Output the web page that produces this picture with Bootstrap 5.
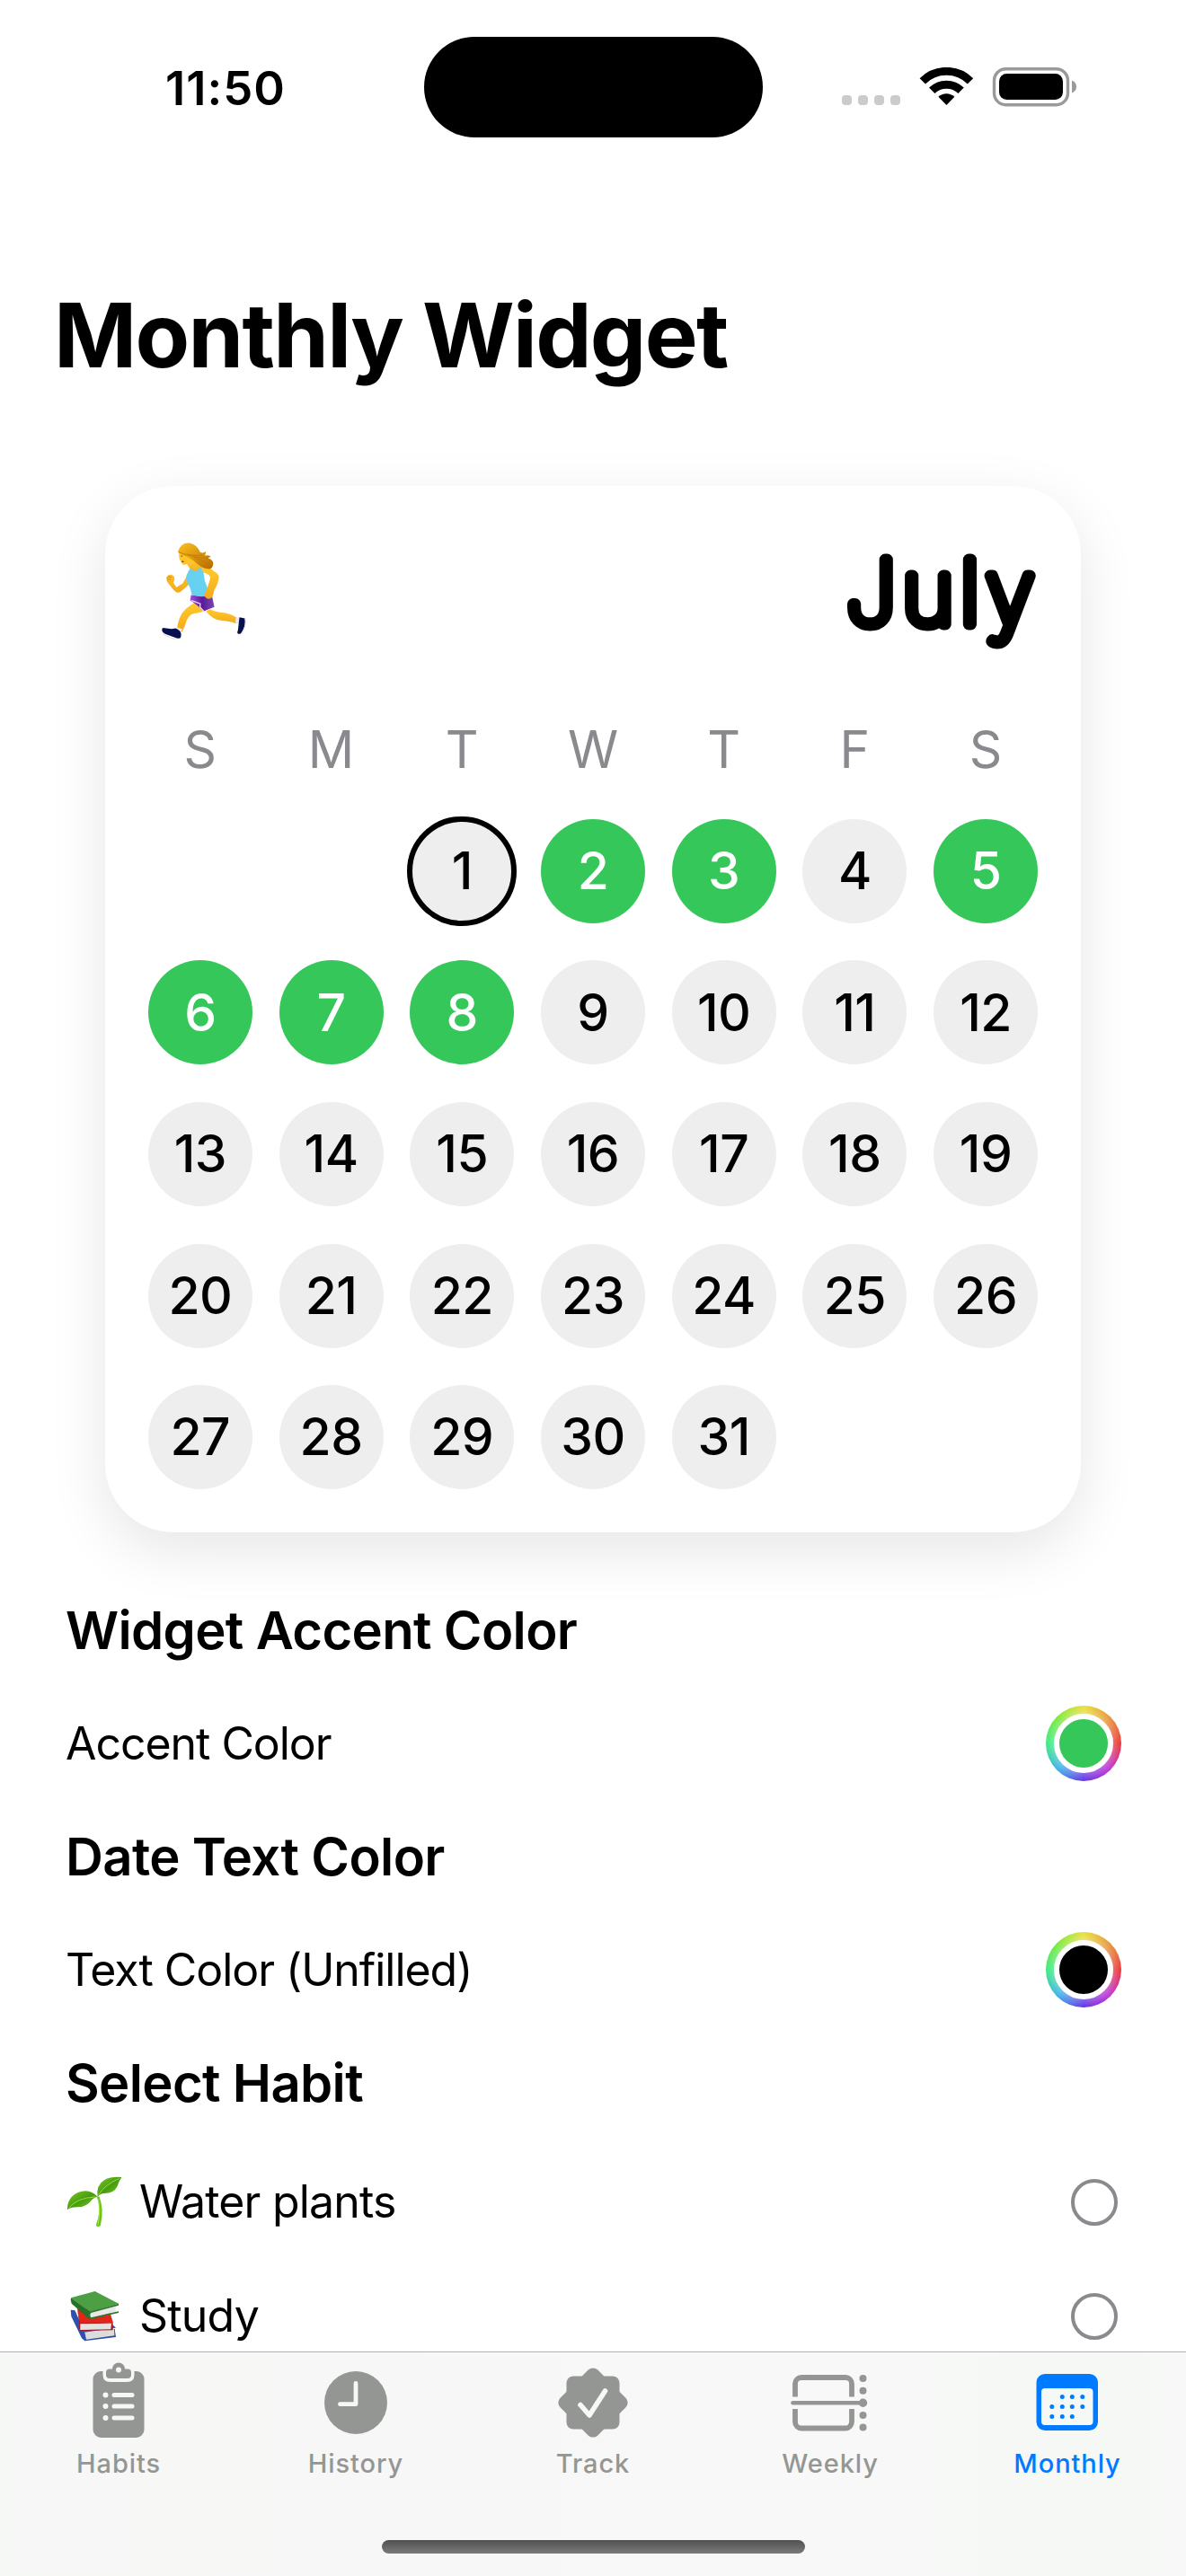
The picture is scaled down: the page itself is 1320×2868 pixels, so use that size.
<!DOCTYPE html>
<html lang="en">
<head>
<meta charset="utf-8">
<meta name="viewport" content="width=device-width, initial-scale=1">
<title>Monthly Widget</title>
<link href="https://cdn.jsdelivr.net/npm/bootstrap@5.3.0/dist/css/bootstrap.min.css" rel="stylesheet">
<style>
  body { font-family: Inter, "Liberation Sans", sans-serif; color: #000; background: #fff; width: 1320px; height: 2868px; overflow: hidden; }
  svg { display: block; flex: none; }
  .statusbar { height: 194px; padding-top: 41px; }
  .clock-text { width: 472px; padding-left: 184px; font-size: 52.5px; font-weight: 600; line-height: 112px; letter-spacing: 1px; padding-top: 1px; }
  .island { width: 377px; height: 112px; border-radius: 56px; background: #000; }
  .status-icons { margin-left: 88px; height: 112px; }
  .page-title { font-size: 99px; font-weight: 700; line-height: 120px; margin: 119px 0 0 60px; letter-spacing: -1.7px; white-space: nowrap; }
  .widget { width: 1086px; height: 1165px; margin: 108px 0 0 117px; border-radius: 76px; background: #fff; box-shadow: 0 20px 64px rgba(0,0,0,.1); padding: 0 33px; }
  .widget-head { height: 254px; padding: 62px 12px 0 30px; }
  .week { height: 80px; margin-bottom: 16px; font-size: 57px; line-height: 80px; color: #8a8a8e; }
  .week > div, .days > div { width: 14.2857%; }
  .days > div { height: 157.6px; }
  .day { width: 116px; height: 116px; border-radius: 50%; background: #eee; font-size: 57px; font-weight: 500; letter-spacing: -.5px; }
  .day.done { background: #35c759; color: #fff; }
  .day.today { width: 122px; height: 122px; border: 6px solid #000; }
  .settings { height: 912px; padding: 46px 72px 0 73px; overflow: hidden; }
  .settings h2 { font-size: 58px; font-weight: 600; line-height: 126px; margin: 0; letter-spacing: -.65px; white-space: nowrap; }
  .setting { height: 126px; font-size: 50px; letter-spacing: -1.05px; }
  .habit { height: 127px; font-size: 50px; letter-spacing: -.8px; }
  .habits { padding-top: 6px; }
  .wheel { width: 84px; height: 84px; border-radius: 50%; background: radial-gradient(circle 42px, rgba(255,255,255,.25) 78%, rgba(255,255,255,0) 100%), conic-gradient(#e8df3a, #e8973a 12.5%, #ea3738 25%, #bd34d6 37.5%, #6034e2 50%, #3fb2ea 62.5%, #3bea80 75%, #7aea3a 87.5%, #e8df3a); }
  .wheel > div { width: 66px; height: 66px; border: 6px solid #fff; border-radius: 50%; }
  .radio-ring { width: 52px; height: 52px; border: 4px solid #8a8a8e; border-radius: 50%; margin-right: 4px; }
  .tabs { height: 250px; border-top: 1px solid #b2b2b2; background: linear-gradient(90deg, #f6f8f6 0, #f7f7f6 12%, #f7f7f7 25%, #f8f8f8 70%, #f5f8f5 94%, #f8f8f8 100%); padding-top: 5px; }
  .tab { width: 264px; color: #949693; font-size: 29px; font-weight: 500; line-height: 46px; letter-spacing: .9px; }
  .tab.current { color: #007aff; }
  .home-bar { width: 471px; height: 15px; border-radius: 8px; margin-top: 62px; background: linear-gradient(#505050, #7b7b7b); }
</style>
</head>
<body class="d-flex flex-column">
<header class="statusbar d-flex">
  <div class="clock-text">11:50</div>
  <div class="island"></div>
  <div class="status-icons d-flex align-items-center">
    <svg width="263" height="44" viewBox="937 75 263 44">
      <g fill="#cbcbcb"><rect x="937" y="106" width="11" height="11" rx="4"/><rect x="955" y="106" width="11" height="11" rx="4"/><rect x="973" y="106" width="11" height="11" rx="4"/><rect x="991" y="106" width="11" height="11" rx="4"/></g>
      <g transform="translate(1053.4 117)">
        <path d="M-26.6-26.6A37.6 37.6 0 0 1 26.6-26.6M-16.2-16.2A23 23 0 0 1 16.2-16.2" fill="none" stroke="#000" stroke-width="9"/>
        <path d="M0 0L-9-9.2A13 13 0 0 1 9-9.2Z"/>
      </g>
      <rect x="1106.5" y="76.7" width="82" height="40" rx="13" fill="none" stroke="#9a9a9a" stroke-width="3.4"/>
      <rect x="1112" y="82" width="71" height="29" rx="8.5"/>
      <path d="M1193 89.5q5 2 5 7t-5 7z" fill="#9a9a9a"/>
    </svg>
  </div>
</header>

<h1 class="page-title">Monthly Widget</h1>

<section class="widget flex-shrink-0">
  <div class="widget-head d-flex justify-content-between align-items-start">
    <svg width="94" height="109" viewBox="0 0 300 342" preserveAspectRatio="none">
      <defs>
        <linearGradient id="skin" x2="0" y2="1"><stop stop-color="#ffcb2e"/><stop offset="1" stop-color="#f5a81c"/></linearGradient>
        <linearGradient id="hair" x2="1" y2="1"><stop stop-color="#ffc21c"/><stop offset="1" stop-color="#b36a00"/></linearGradient>
        <linearGradient id="purple" x2="1"><stop stop-color="#a24fd8"/><stop offset=".5" stop-color="#5a1897"/><stop offset="1" stop-color="#7a4ab0"/></linearGradient>
      </defs>
      <path d="M172 236q25 12 45 12 32 5 54 20l-6 18q-30-10-56-11-30-4-52-32z" fill="url(#skin)"/>
      <path d="M264 265l14 4-4 18-13-5z" fill="#e9e9ee"/>
      <path d="M276 264l19 4q6 24-12 51-4 5-11 3-6-1-1-14z" fill="#06104e"/>
      <path d="M297 270q4 28-14 52" fill="none" stroke="#e6e6ea" stroke-width="4"/>
      <path d="M119 212l42 21q-21 17-46 18-23 4-33 44l-10 21-18-6q2-31 17-58 16-22 48-40z" fill="url(#skin)"/>
      <path d="M53 300l20 5-8 18-15-6z" fill="#e9e9ee"/>
      <path d="M1 307q0-7 9-5l25 3 14-2q9 4 15 9 8 8 3 24-5 4-14 1-20-7-39-14-14-5-13-16z" fill="#06104e"/>
      <path d="M3 323q25 13 53 21" fill="none" stroke="#e6e6ea" stroke-width="4"/>
      <path d="M104 187q42 2 73-5l10 46-38 15-20-18-28-20z" fill="url(#purple)"/>
      <path d="M106 206l31 11-1 12 13 13" fill="none" stroke="#e8dcf0" stroke-width="4"/>
      <path d="M127 91q-14-3-27 10l-26 46q-14 8-22 13-6-10-11-17 6-8 4-18-3-8-11-10-17-1-17 16 0 10 9 18 12 17 21 24 12 10 24-1 22-16 34-34z" fill="url(#skin)"/>
      <path d="M36 124q-12-5-19 4M32 132q-8-4-13 4" fill="none" stroke="#cf8612" stroke-width="3"/>
      <path d="M84 70l20-8 40 14 8 18-8 16-32 4z" fill="url(#skin)"/>
      <path d="M103 92q5 12 18 9 12-2 18-15l11 2q-7 50 26 96-30 16-69 2-5-29-20-49-4-20 16-45z" fill="#67d1f2"/>
      <path d="M141 90q22-6 48 16 14 8 14 19-2 22-16 44l-7 24q-11 12-23 3-11-10 1-22l14-44q2-8-5-14-16-6-24-14z" fill="url(#skin)"/>
      <path d="M62 34l-1 18q1 10 8 19l4 8q9 5 18-2 12 8 24-4 10-8 12-20l-37-22z" fill="#ffc32c"/>
      <path d="M57 36Q68 2 99 5q27 6 38 33 14 4 19-4 2 9-3 15 16-4 22 4-8 1-10 5 18 6 18 18-2 20-15 20-24-2-38-15-14-14-34-25-22-8-39-20z" fill="url(#hair)"/>
      <path d="M60 37q36 15 86 10M92 44q26 14 70 13M116 56l44 18" fill="none" stroke="#c77a05" stroke-width="3"/>
      <path d="M69 50l4 1M71 68q6 4 6 0" fill="none" stroke="#6a3c13" stroke-width="4"/>
    </svg>
    <svg width="240" height="140" viewBox="0 0 240 140" class="overflow-visible">
      <text x="240" y="91.500" text-anchor="end" font-family="Inter, sans-serif" font-size="99" font-weight="100" fill="#000" stroke="#000" stroke-width="13" stroke-linejoin="round" letter-spacing="7">July</text>
    </svg>
  </div>
  <div class="week d-flex text-center"><div>S</div><div>M</div><div>T</div><div>W</div><div>T</div><div>F</div><div>S</div></div>
  <div class="days d-flex flex-wrap" id="days"></div>
</section>

<main class="settings flex-shrink-0">
  <h2>Widget Accent Color</h2>
  <div class="setting d-flex align-items-center justify-content-between"><span>Accent Color</span><div class="wheel d-flex align-items-center justify-content-center"><div style="background:#35c759"></div></div></div>
  <h2>Date Text Color</h2>
  <div class="setting d-flex align-items-center justify-content-between"><span>Text Color (Unfilled)</span><div class="wheel d-flex align-items-center justify-content-center"><div style="background:#000"></div></div></div>
  <h2>Select Habit</h2>
  <div class="habits">
    <div class="habit d-flex align-items-center">
      <svg width="82" height="60" viewBox="73 78 246 180">
        <defs><linearGradient id="leaf" x2="1" y2="1"><stop stop-color="#7ccb1c"/><stop offset=".5" stop-color="#479d12"/><stop offset="1" stop-color="#7dd31c"/></linearGradient></defs>
        <path d="M178 150q16 45-3 92-1 6 5 7 8 1 10-5 12-55-5-96z" fill="#6cc41a"/>
        <path d="M183 158q8 42-2 86" fill="none" stroke="#a5e640" stroke-width="3"/>
        <path d="M180 149Q154 120 116 134 78 150 79 193 88 184 111 184 142 185 162 158 170 150 180 149z" fill="url(#leaf)"/>
        <path d="M180 150q-6-40 23-57 22-12 57-9-9 13-14 30-11 24-44 24-15 1-22 12z" fill="url(#leaf)"/>
        <path d="M83 188q28-36 90-38M183 143q20-34 70-55" fill="none" stroke="#a7df55" stroke-width="2.500"/>
      </svg>
      <span>Water plants</span><div class="radio-ring ms-auto"></div>
    </div>
    <div class="habit d-flex align-items-center">
      <svg width="82" height="60" viewBox="70 444 246 180">
        <path d="M87 512l14 2 36 80 98-18v8l3 19-104 13-10-9-35-73z" fill="#2f4fae"/>
        <path d="M134 587l98-12 1 23-94 13z" fill="#dcdcdc"/>
        <path d="M124 580l106-16 8 8-104 15z" fill="#3658c2"/>
        <path d="M109 508l106 2 14 46-110 5z" fill="#e0261c"/>
        <path d="M109 510l10 46 109 0 0 24-108 2q-8-12-4-22z" fill="#b3140f"/>
        <path d="M119 559l104-2-2 20-102 2z" fill="#e3e3e3"/>
        <path d="M88 472l80-22 79 41-95 28z" fill="#4d9f43"/>
        <path d="M88 472l64 46-2 26-60-53q-5-9-2-19z" fill="#27702a"/>
        <path d="M153 520l87-26q-5 12-1 24l-86 22q-5-8 0-20z" fill="#e8e8e8"/>
        <path d="M151 518l96-27v6l-92 25q-6 8 0 16l92-21v5l-96 22q-8-12 0-26z" fill="#2a7a2d"/>
      </svg>
      <span>Study</span><div class="radio-ring ms-auto"></div>
    </div>
  </div>
</main>

<nav class="tabs flex-shrink-0 d-flex flex-column align-items-center">
  <div class="d-flex text-center">
    <div class="tab d-flex flex-column align-items-center">
      <svg width="110" height="96" viewBox="-55 -51 110 96" fill="currentColor">
        <path d="M-17.5-35H-20a9 9 0 0 0-8.500 9V30a9 9 0 0 0 9 9h39a9 9 0 0 0 9-9V-26a9 9 0 0 0-8.500-9H17.500v4q0 8-8 8h-19q-8 0-8-8z"/>
        <path fill-rule="evenodd" d="M-7-37.500a7 7 0 0 1 14 0h3a4 4 0 0 1 4 4v2.500a4 4 0 0 1-4 4h-20a4 4 0 0 1-4-4v-2.500a4 4 0 0 1 4-4zM0-39.500a3 3 0 1 0 0 6 3 3 0 0 0 0-6"/>
        <g fill="#f7f7f7"><circle cx="-14.500" cy="-8.500" r="3"/><circle cx="-14.500" cy="4" r="3"/><circle cx="-14.500" cy="17" r="3"/><rect x="-7.500" y="-11" width="25" height="5" rx="2.500"/><rect x="-7.500" y="1.500" width="25" height="5" rx="2.500"/><rect x="-7.500" y="14.500" width="25" height="5" rx="2.500"/></g>
      </svg><span>Habits</span>
    </div>
    <div class="tab d-flex flex-column align-items-center">
      <svg width="110" height="96" viewBox="-55 -51 110 96" fill="currentColor">
        <circle r="35"/><path d="M0-21.500V1.700H-17.500" fill="none" stroke="#f7f7f7" stroke-width="4.800" stroke-linecap="round" stroke-linejoin="round"/>
      </svg><span>History</span>
    </div>
    <div class="tab d-flex flex-column align-items-center">
      <svg width="110" height="96" viewBox="-55 -51 110 96" fill="currentColor">
        <rect x="-29.500" y="-29.500" width="59" height="59" rx="7.500"/><rect x="-29.500" y="-29.500" width="59" height="59" rx="7.500" transform="rotate(45)"/>
        <path d="M-14 2.500L-4 14 13.500-13" fill="none" stroke="#f8f8f8" stroke-width="5.600" stroke-linecap="round" stroke-linejoin="round"/>
      </svg><span>Track</span>
    </div>
    <div class="tab d-flex flex-column align-items-center">
      <svg width="110" height="96" viewBox="-55 -51 110 96" fill="currentColor">
        <path d="M-39-6.500V-21a7 7 0 0 1 7-7H17a7 7 0 0 1 7 7v14.500M-39 7V21.500a7 7 0 0 0 7 7H17a7 7 0 0 0 7-7V7" fill="none" stroke="currentColor" stroke-width="5.800"/>
        <path d="M-41.500.3H36" stroke="currentColor" stroke-width="4.600" stroke-linecap="round"/>
        <circle cx="36.500" cy="-27" r="4"/><circle cx="36.500" cy="-13.300" r="4"/><circle cx="36.500" cy=".3" r="4.700"/><circle cx="36.500" cy="14" r="4"/><circle cx="36.500" cy="27.500" r="4"/>
      </svg><span>Weekly</span>
    </div>
    <div class="tab current d-flex flex-column align-items-center">
      <svg width="110" height="96" viewBox="-55 -51 110 96" fill="currentColor">
        <path fill-rule="evenodd" d="M-25-32h49.500a9.500 9.500 0 0 1 9.500 9.500V21.500a9.500 9.500 0 0 1-9.500 9.500H-25a9.500 9.500 0 0 1-9.500-9.500v-44A9.500 9.500 0 0 1-25-32zM-25-16a4 4 0 0 0-4 4V21a4 4 0 0 0 4 4H24.500a4 4 0 0 0 4-4V-12a4 4 0 0 0-4-4z"/>
        <path d="M-5.500-6.500h0M5.500-6.500h0M17-6.500h0M-17 4.500h0M-5.500 4.500h0M5.500 4.500h0M17 4.500h0M-17 15.500h0M-5.500 15.500h0M5.500 15.500h0" transform="translate(-.2 0)" stroke="currentColor" stroke-width="5" stroke-linecap="round"/>
      </svg><span>Monthly</span>
    </div>
  </div>
  <div class="home-bar"></div>
</nav>

<script>
  // July opens on a Tuesday: two blank cells come first.
  const done = [2, 3, 5, 6, 7, 8];
  let cells = '<div></div><div></div>';
  for (let d = 1; d <= 31; d++) {
    const state = done.includes(d) ? ' done' : d === 1 ? ' today' : '';
    cells += `<div class="d-flex align-items-center justify-content-center"><div class="day${state} d-flex align-items-center justify-content-center flex-shrink-0">${d}</div></div>`;
  }
  document.getElementById('days').innerHTML = cells;
</script>
<script src="https://cdn.jsdelivr.net/npm/bootstrap@5.3.0/dist/js/bootstrap.bundle.min.js"></script>
</body>
</html>
